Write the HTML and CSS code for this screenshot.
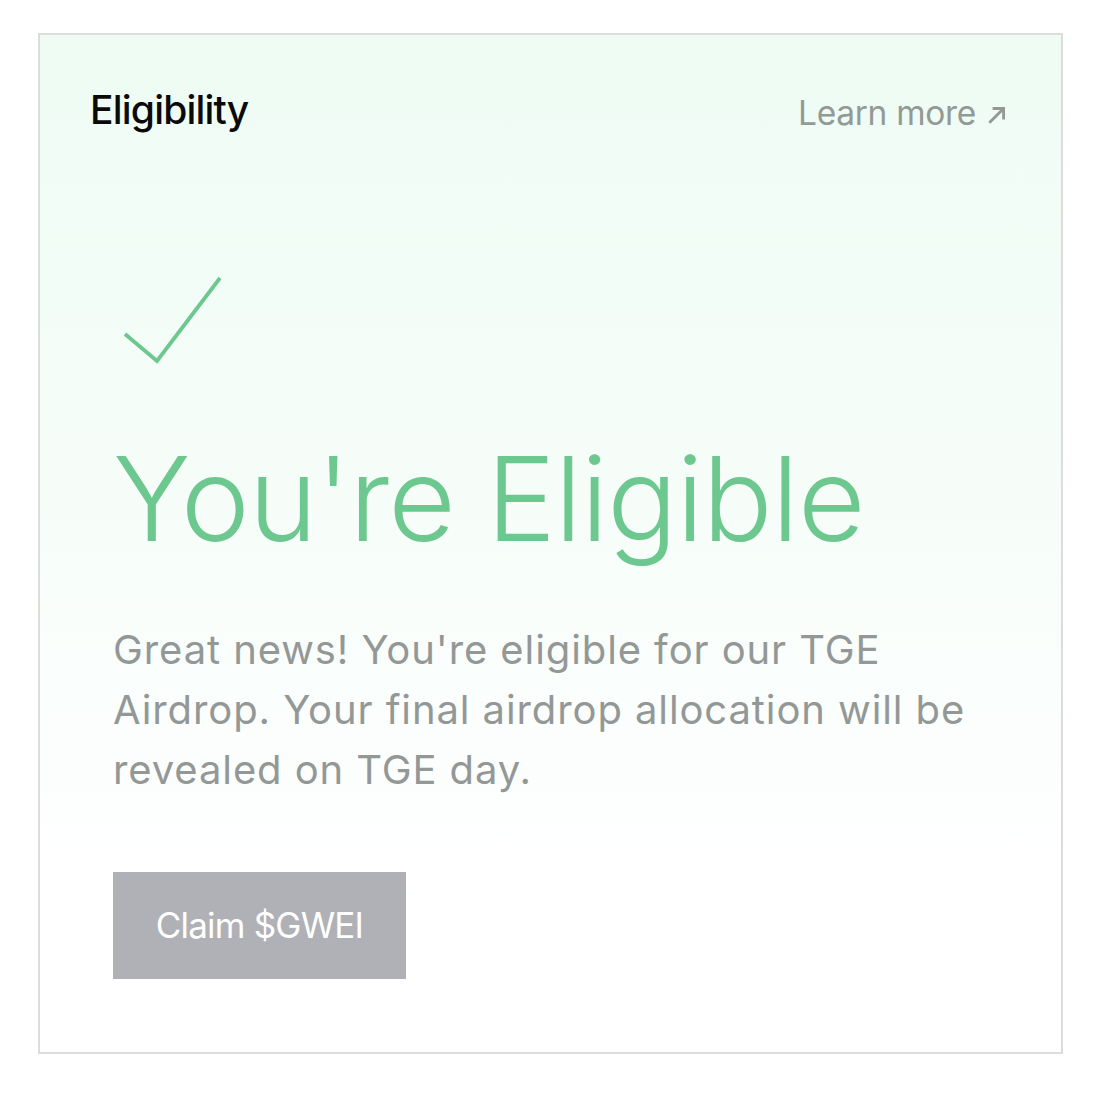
FILE: index.html
```html
<!DOCTYPE html>
<html>
<head>
<meta charset="utf-8">
<link rel="stylesheet" href="styles.css">
</head>
<body>
<div class="card">
  <div class="header">
    <div class="title">Eligibility</div>
    <a class="learn">Learn more <svg class="arrow" viewBox="0 0 20 20" width="22" height="22"><path d="M3 18 L16 5 M6 5 H16 V15" fill="none" stroke="currentColor" stroke-width="2.6"/></svg></a>
  </div>
  <div class="content">
    <svg class="check" width="104" height="92" viewBox="0 0 104 92"><path d="M4 58 L36 85 L99 2" fill="none" stroke="#6cc88e" stroke-width="3.8"/></svg>
    <h1 class="headline">You're Eligible</h1>
    <p class="desc">Great news! You're eligible for our TGE Airdrop. Your final airdrop allocation will be revealed on TGE day.</p>
    <button class="claim">Claim $GWEI</button>
  </div>
</div>
</body>
</html>
```
FILE: styles.css
```css
html, body { margin: 0; padding: 0; background: #fff; }
body { padding: 33px 38px; font-family: Inter, "Noto Sans", sans-serif; }
.card {
  width: 1025px;
  height: 1021px;
  border: 2px solid #dcdcdc;
  background: linear-gradient(180deg, #eefcf4 0%, #f6fdf9 45%, #ffffff 85%);
  box-sizing: border-box;
}
.header {
  display: flex;
  justify-content: space-between;
  align-items: center;
  padding: 51px 53px 0 50px;
}
.title { font-size: 39px; color: #0a0a0a; font-weight: 500; letter-spacing: -0.8px; }
.learn { font-size: 33.5px; color: #939a95; display: flex; align-items: center; gap: 10px; letter-spacing: -0.3px; margin-top: 6px; }
.arrow { margin-top: 2px; }
.content { padding: 137px 0 0 73px; }
.check { display: block; margin-left: 8px; margin-top: 6px; }
.headline {
  margin: 73px 0 0 0;
  font-size: 116.5px;
  font-weight: 300;
  color: #6cc88e;
  line-height: 1;
  letter-spacing: -1px;
}
.desc {
  margin: 62px 0 0 0;
  font-size: 40px;
  line-height: 60px;
  color: #939897;
  width: 870px;
  letter-spacing: 0.9px;
}
.claim {
  margin-top: 72px;
  width: 293px;
  height: 107px;
  background: #b0b1b6;
  color: #fff;
  border: none;
  font-family: Inter, sans-serif;
  font-size: 35px;
  letter-spacing: -0.8px;
}
```
